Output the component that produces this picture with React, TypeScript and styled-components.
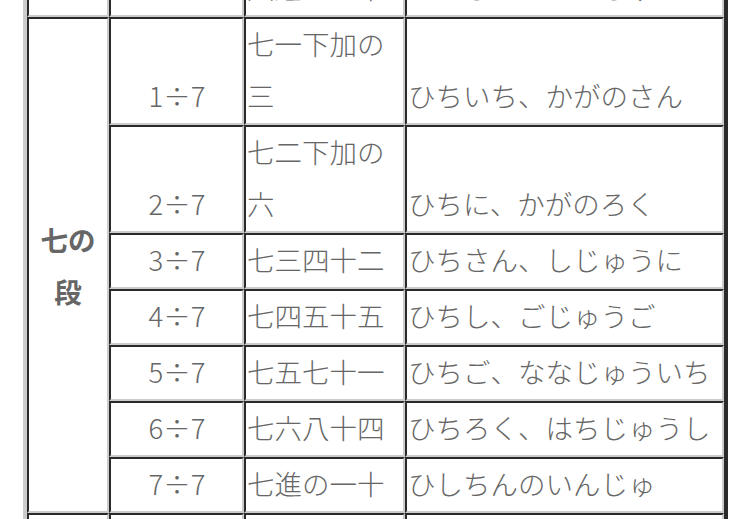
import React from "react";
import styled, { createGlobalStyle } from "styled-components";

const Global = createGlobalStyle`
  html, body {
    margin: 0;
    padding: 0;
    background: #ffffff;
    overflow: hidden;
  }
`;

const Viewport = styled.div`
  height: 519px;
  overflow: hidden;
  padding-left: 23px;
  box-sizing: border-box;
`;

const Table = styled.table`
  margin-top: -43px;
  width: 705px;
  border-collapse: separate;
  border-spacing: 0;
  border-style: solid;
  border-width: 4px;
  border-color: #cccccc #2a2a2a #2a2a2a #cccccc;
  table-layout: fixed;
  font-family: "Noto Sans CJK JP", "Noto Sans", sans-serif;
  font-size: 27.5px;
  font-weight: 300;
  line-height: 52px;
  color: #666666;
`;

const Cell = styled.td<{ $center?: boolean }>`
  border-style: solid;
  border-width: 2px;
  border-color: #2a2a2a #cccccc #cccccc #2a2a2a;
  padding: 0 0 0 1px;
  vertical-align: bottom;
  text-align: ${(p) => (p.$center ? "center" : "left")};
  white-space: nowrap;
  overflow: hidden;
`;

const Text = styled.span`
  display: block;
  margin-top: -2px;
  margin-bottom: 2px;
`;

const Head = styled.th`
  border-style: solid;
  border-width: 2px;
  border-color: #2a2a2a #cccccc #cccccc #2a2a2a;
  padding: 0;
  vertical-align: middle;
  text-align: center;
  font-weight: 700;
  color: #666666;
`;

type Row = { q: string; rule: string[]; read: string };

const rows: Row[] = [
  { q: "1÷7", rule: ["七一下加の", "三"], read: "ひちいち、かがのさん" },
  { q: "2÷7", rule: ["七二下加の", "六"], read: "ひちに、かがのろく" },
  { q: "3÷7", rule: ["七三四十二"], read: "ひちさん、しじゅうに" },
  { q: "4÷7", rule: ["七四五十五"], read: "ひちし、ごじゅうご" },
  { q: "5÷7", rule: ["七五七十一"], read: "ひちご、ななじゅういち" },
  { q: "6÷7", rule: ["七六八十四"], read: "ひちろく、はちじゅうし" },
  { q: "7÷7", rule: ["七進の一十"], read: "ひしちんのいんじゅ" },
];

const Lines: React.FC<{ lines: string[] }> = ({ lines }) => (
  <Text>
    {lines.map((l, i) => (
      <React.Fragment key={i}>
        {i > 0 && <br />}
        {l}
      </React.Fragment>
    ))}
  </Text>
);

export default function App() {
  return (
    <>
      <Global />
      <Viewport>
        <Table>
          <colgroup>
            <col style={{ width: 82 }} />
            <col style={{ width: 135 }} />
            <col style={{ width: 161 }} />
            <col style={{ width: 319 }} />
          </colgroup>
          <tbody>
            <tr>
              <Head></Head>
              <Cell $center><Text>6÷6</Text></Cell>
              <Cell><Text>六進の一十</Text></Cell>
              <Cell><Text>ろくしんのいんじゅ</Text></Cell>
            </tr>
            {rows.map((r, i) => (
              <tr key={r.q}>
                {i === 0 && (
                  <Head rowSpan={rows.length}>
                    七の
                    <br />段
                  </Head>
                )}
                <Cell $center><Text>{r.q}</Text></Cell>
                <Cell>
                  <Lines lines={r.rule} />
                </Cell>
                <Cell><Text>{r.read}</Text></Cell>
              </tr>
            ))}
            <tr>
              <Head>
                八の
                <br />段
              </Head>
              <Cell $center><Text>1÷8</Text></Cell>
              <Cell>
                <Lines lines={["八一下加の", "二"]} />
              </Cell>
              <Cell><Text>はちいち、かがのに</Text></Cell>
            </tr>
          </tbody>
        </Table>
      </Viewport>
    </>
  );
}
